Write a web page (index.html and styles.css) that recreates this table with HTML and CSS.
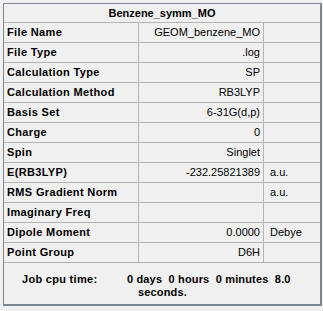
FILE: index.html
```html
<!DOCTYPE html>
<html>
<head>
<meta charset="utf-8">
<link rel="stylesheet" href="styles.css">
</head>
<body>
<div class="frame">
  <div class="title">Benzene_symm_MO</div>
  <div class="row"><div class="label">File Name</div><div class="value">GEOM_benzene_MO</div><div class="unit"></div></div>
  <div class="row"><div class="label">File Type</div><div class="value">.log</div><div class="unit"></div></div>
  <div class="row"><div class="label">Calculation Type</div><div class="value">SP</div><div class="unit"></div></div>
  <div class="row"><div class="label">Calculation Method</div><div class="value">RB3LYP</div><div class="unit"></div></div>
  <div class="row"><div class="label">Basis Set</div><div class="value">6-31G(d,p)</div><div class="unit"></div></div>
  <div class="row"><div class="label">Charge</div><div class="value">0</div><div class="unit"></div></div>
  <div class="row"><div class="label">Spin</div><div class="value">Singlet</div><div class="unit"></div></div>
  <div class="row"><div class="label">E(RB3LYP)</div><div class="value">-232.25821389</div><div class="unit">a.u.</div></div>
  <div class="row"><div class="label">RMS Gradient Norm</div><div class="value"></div><div class="unit">a.u.</div></div>
  <div class="row"><div class="label">Imaginary Freq</div><div class="value"></div><div class="unit"></div></div>
  <div class="row"><div class="label">Dipole Moment</div><div class="value">0.0000</div><div class="unit">Debye</div></div>
  <div class="row"><div class="label">Point Group</div><div class="value">D6H</div><div class="unit"></div></div>
  <div class="footer">
    <div class="job-label">Job cpu time:</div>
    <div class="job-value">0 days  0 hours  0 minutes  8.0 seconds.</div>
  </div>
</div>
</body>
</html>
```
FILE: styles.css
```css
html, body {
  margin: 0;
  padding: 0;
  background: #f0f0f0;
}
body {
  font-family: "Liberation Sans", Arial, sans-serif;
  font-size: 11px;
  color: #000;
}
.frame {
  margin: 3px 0 0 3px;
  width: 316px;
  border-left: 1px solid #7f868d;
  border-top: 1px solid #7f868d;
  border-right: 2px solid #7f868d;
  border-bottom: 2px solid #7f868d;
  background: #f0f0f0;
}
.title {
  height: 18px;
  line-height: 18px;
  text-align: center;
  font-weight: bold;
  border-bottom: 1px solid #b4b4b4;
}
.row {
  display: grid;
  grid-template-columns: 134px 124px 56px;
  column-gap: 1px;
  background: #b4b4b4;
  border-bottom: 1px solid #b4b4b4;
  height: 19px;
  line-height: 19px;
}
.row > div {
  background: #f0f0f0;
  white-space: nowrap;
  overflow: hidden;
}
.label {
  font-weight: bold;
  padding-left: 3px;
  letter-spacing: 0.35px;
}
.value {
  text-align: right;
  padding-right: 3px;
}
.unit {
  padding-left: 6px;
}
.footer {
  display: flex;
  height: 41px;
  box-sizing: border-box;
  padding-top: 10px;
  font-weight: bold;
  line-height: 13px;
}
.job-label {
  padding-left: 18px;
  width: 105px;
  letter-spacing: 0.3px;
}
.job-value {
  padding-left: 11px;
  text-indent: -11px;
  width: 170px;
  white-space: pre-wrap;
  letter-spacing: 0.15px;
}
```
